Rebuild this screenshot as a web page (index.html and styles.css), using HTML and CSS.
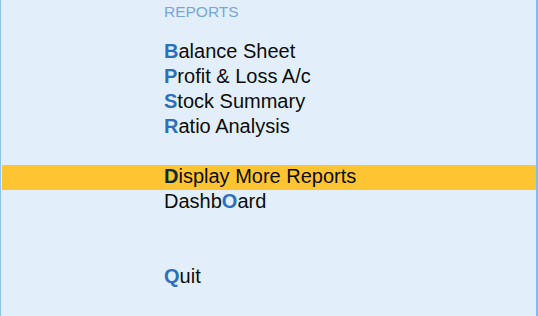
FILE: index.html
```html
<!DOCTYPE html>
<html>
  <head>
    <title>Gateway</title>
    <link rel="stylesheet" href="styles.css">
  </head>
  <body>
    <div class="panel">
      <div class="heading">REPORTS</div>
      <ul class="menu">
        <li><b class="key">B</b>alance Sheet</li>
        <li><b class="key">P</b>rofit &amp; Loss A/c</li>
        <li><b class="key">S</b>tock Summary</li>
        <li><b class="key">R</b>atio Analysis</li>
        <li class="gap"></li>
        <li class="active"><b class="key">D</b>isplay More Reports</li>
        <li>Dashb<b class="key">O</b>ard</li>
        <li class="gap"></li>
        <li class="gap"></li>
        <li><b class="key">Q</b>uit</li>
      </ul>
    </div>
  </body>
</html>
```

FILE: styles.css
```css
html,
body {
  margin: 0;
  height: 100%;
}
body {
  font-family: "Liberation Sans", Arial, sans-serif;
  background-color: #e2effa;
  color: #0c0c0c;
}
.panel {
  box-sizing: border-box;
  height: 100%;
  border-left: 1px solid #8fc3f2;
  border-right: 2px solid #7dbcf4;
  padding-left: 1px;
}
.heading {
  box-sizing: border-box;
  height: 40px;
  padding: 4px 0 0 162px;
  font-size: 15.5px;
  line-height: 15px;
  color: #76a6da;
}
.menu {
  list-style: none;
  margin: 0;
  padding: 0;
}
.menu li {
  height: 19px;
  padding: 2px 0 4px 162px;
  font-size: 20px;
  line-height: 19px;
}
.menu .active {
  background-color: #fec431;
}
.key {
  color: #2f6dbd;
}
.active .key {
  color: #0f2a2e;
}
```
